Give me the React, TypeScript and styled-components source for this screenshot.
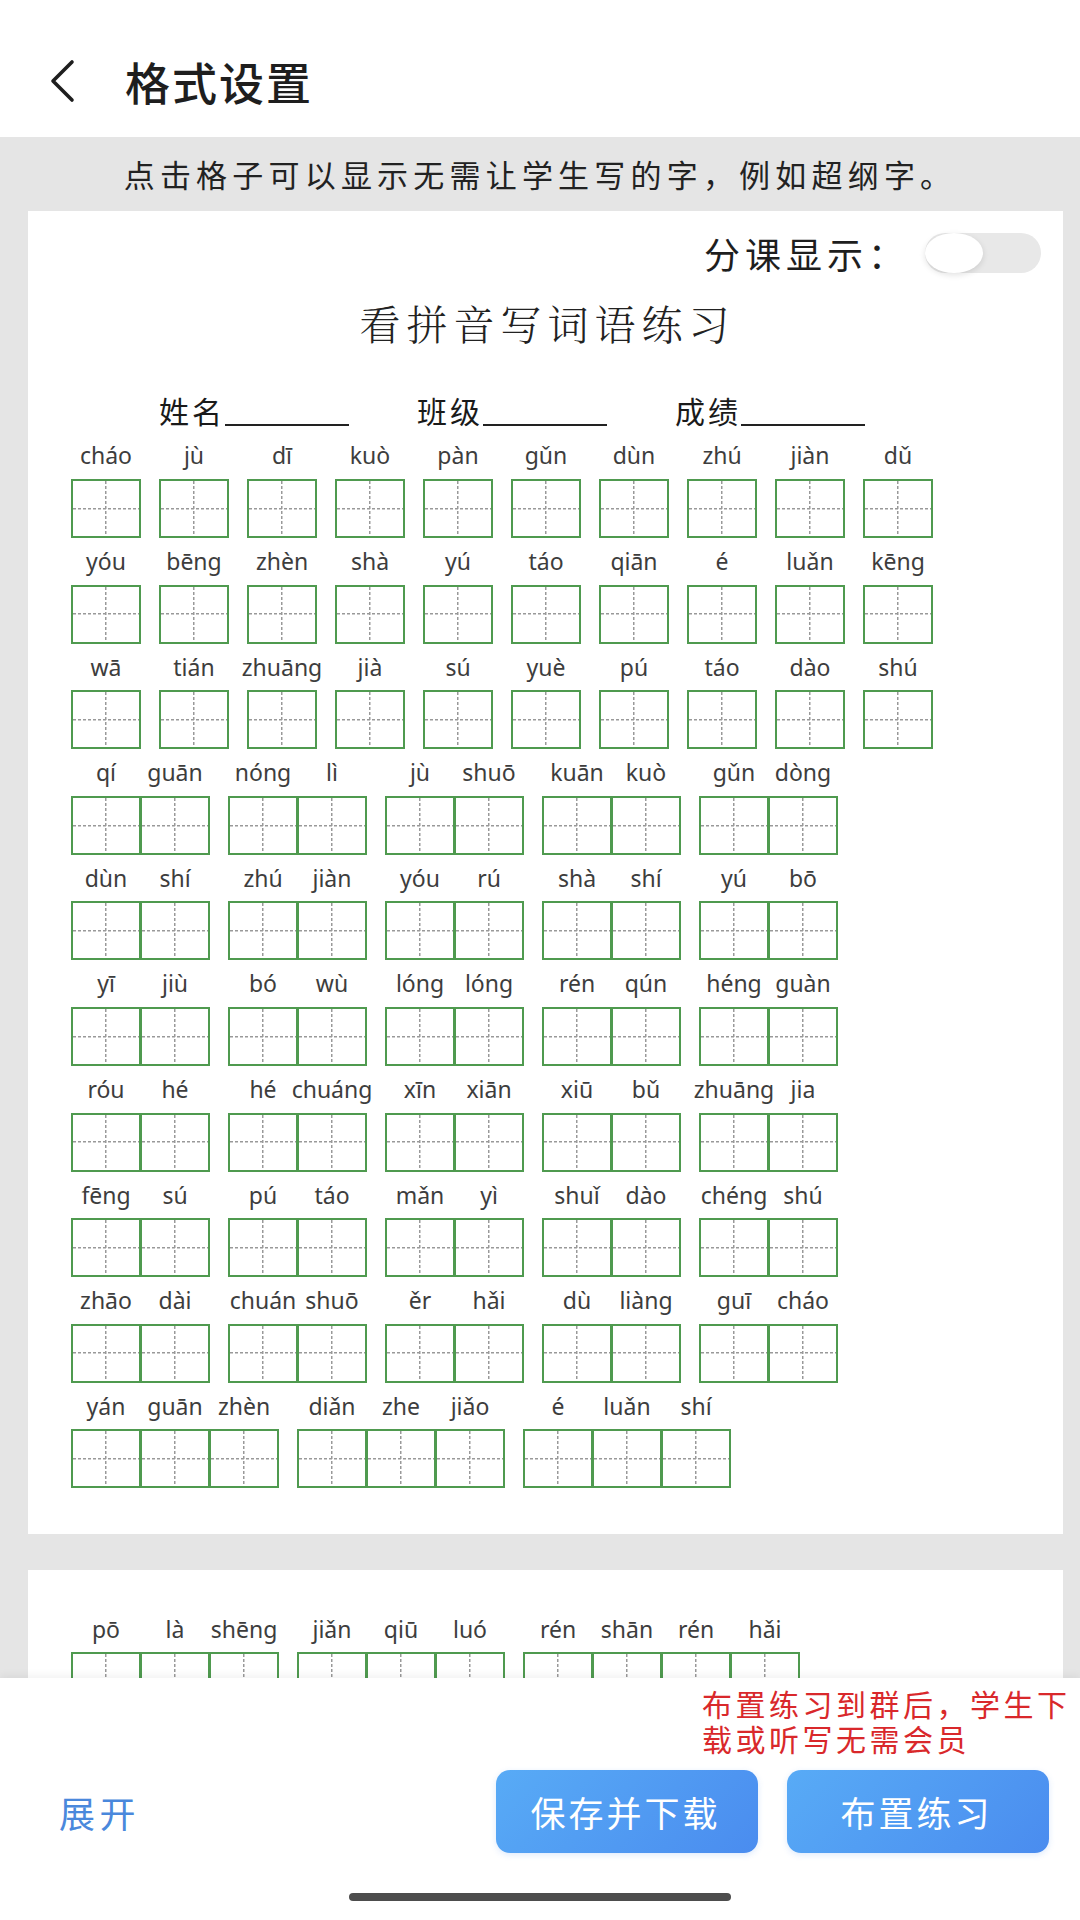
import React from "react";
import styled, { createGlobalStyle } from "styled-components";

const CJK = `"Noto Sans CJK SC", "Noto Sans", sans-serif`;
const KAI = `"KaiTi", "STKaiti", "AR PL UKai CN", "Noto Serif CJK SC", "Noto Sans CJK SC", serif`;
const PINYIN = `"Noto Sans", "DejaVu Sans", sans-serif`;

const GlobalStyle = createGlobalStyle`
  html, body { margin: 0; padding: 0; background: #fff; }
  body { width: 1080px; height: 1920px; overflow: hidden; font-family: ${CJK}; color: #222; }
  * { box-sizing: border-box; }
`;

const Screen = styled.div`
  width: 1080px;
  height: 1920px;
  display: flex;
  flex-direction: column;
  background: #fff;
`;

const Header = styled.header`
  height: 137px;
  flex-shrink: 0;
  display: flex;
  align-items: center;
  gap: 48px;
  padding: 25px 0 0 47px;
  background: #fff;
`;

const BackButton = styled.button`
  border: 0;
  background: none;
  padding: 0;
  width: 30px;
  height: 44px;
  display: flex;
  align-items: center;
  justify-content: center;
  cursor: pointer;
`;

const HeaderTitle = styled.h1`
  margin: 0;
  font-family: ${CJK};
  font-size: 45px;
  font-weight: 500;
  letter-spacing: 2px;
  line-height: 1;
  color: #1e1e1e;
`;

const Main = styled.main`
  flex: 1;
  min-height: 0;
  overflow: hidden;
  background: #e5e5e5;
  display: flex;
  flex-direction: column;
`;

const Notice = styled.p`
  margin: 0;
  flex-shrink: 0;
  height: 74px;
  line-height: 74px;
  text-align: center;
  font-size: 31px;
  letter-spacing: 5.2px;
  color: #222;
`;

const Sheet = styled.section<{ $cont?: boolean }>`
  flex-shrink: 0;
  margin: 0 17px ${(p) => (p.$cont ? "0" : "36px")} 28px;
  background: #fff;
  padding: ${(p) => (p.$cont ? "35.4px" : "0")} 22px 46px 43px;
`;

const ToggleRow = styled.div`
  display: flex;
  justify-content: flex-end;
  align-items: center;
  gap: 16px;
  padding-top: 22px;
`;

const ToggleLabel = styled.span`
  font-size: 36px;
  letter-spacing: 5px;
  line-height: 40px;
  color: #1e1e1e;
`;

const SwitchTrack = styled.div`
  width: 116px;
  height: 40px;
  border-radius: 20px;
  background: #e8e8e8;
  display: flex;
  align-items: center;
`;

const SwitchKnob = styled.div`
  width: 58px;
  height: 40px;
  border-radius: 50%;
  background: #fff;
  box-shadow: 0 2px 6px rgba(0, 0, 0, 0.12);
`;

const SheetTitle = styled.h2`
  margin: 20px 0 0;
  padding-right: 17px;
  text-align: center;
  font-family: ${KAI};
  font-size: 41px;
  font-weight: 300;
  letter-spacing: 6px;
  line-height: 60px;
  color: #222;
`;

const NameRow = styled.div`
  display: flex;
  gap: 68px;
  margin-top: 37px;
  padding-left: 88px;
  height: 40px;
`;

const NameField = styled.div`
  display: flex;
  align-items: flex-end;
`;

const NameLabel = styled.span`
  font-size: 30px;
  font-weight: 400;
  letter-spacing: 3px;
  line-height: 40px;
  color: #1a1a1a;
`;

const Blank = styled.span`
  width: 124px;
  height: 2px;
  margin-bottom: 4px;
  background: #222;
`;

const Grid = styled.div<{ $first?: boolean }>`
  display: flex;
  flex-direction: column;
  margin-top: ${(p) => (p.$first ? "2.4px" : "0")};
`;

const GridRow = styled.div`
  display: flex;
  gap: 18px;
`;

const Group = styled.div`
  display: flex;
`;

const Unit = styled.div`
  width: 70px;
  display: flex;
  flex-direction: column;
  align-items: center;
  & + & {
    margin-left: -1px;
  }
`;

const Pinyin = styled.span`
  height: 46.6px;
  line-height: 46.6px;
  font-family: ${PINYIN};
  font-size: 23px;
  color: #3d3d3d;
  white-space: nowrap;
`;

const Box = styled.div`
  width: 70px;
  height: 59px;
  border: 2px solid #4f9a4f;
  background-color: #fff;
  background-image: repeating-linear-gradient(to right, #999 0 3px, transparent 3px 5px),
    repeating-linear-gradient(to bottom, #999 0 3px, transparent 3px 5px);
  background-size: 100% 1.5px, 1.5px 100%;
  background-position: center center, center center;
  background-repeat: no-repeat;
`;

const BottomBar = styled.footer`
  height: 242px;
  flex-shrink: 0;
  position: relative;
  z-index: 1;
  background: #fff;
  box-shadow: 0 -3px 8px rgba(0, 0, 0, 0.05);
  display: flex;
  flex-direction: column;
  padding-top: 8px;
`;

const Hint = styled.p`
  margin: 0;
  align-self: flex-end;
  width: 378px;
  font-size: 30px;
  line-height: 35px;
  letter-spacing: 3.5px;
  color: #d9282b;
`;

const ActionRow = styled.div`
  margin-top: 14px;
  display: flex;
  align-items: center;
  gap: 29px;
  padding: 0 31px 0 59px;
`;

const ExpandButton = styled.button`
  margin-right: auto;
  border: 0;
  background: none;
  padding: 0;
  font-family: ${CJK};
  font-size: 36px;
  letter-spacing: 4.5px;
  color: #4a88dc;
  cursor: pointer;
`;

const ActionButton = styled.button`
  width: 262px;
  height: 83px;
  border: 0;
  border-radius: 14px;
  background: linear-gradient(135deg, #58abf6 0%, #4a8cef 100%);
  box-shadow: 0 2px 6px rgba(74, 140, 239, 0.18);
  color: #fff;
  font-family: ${CJK};
  font-size: 35px;
  letter-spacing: 3px;
  padding-left: 3px;
  cursor: pointer;
`;

const HomeIndicator = styled.div`
  align-self: center;
  width: 382px;
  height: 8px;
  border-radius: 4px;
  background: #4d4d4d;
  margin-top: 40px;
`;

type Row = string[][];

const sheetRows: Row[] = [
  [["cháo"], ["jù"], ["dī"], ["kuò"], ["pàn"], ["gǔn"], ["dùn"], ["zhú"], ["jiàn"], ["dǔ"]],
  [["yóu"], ["bēng"], ["zhèn"], ["shà"], ["yú"], ["táo"], ["qiān"], ["é"], ["luǎn"], ["kēng"]],
  [["wā"], ["tián"], ["zhuāng"], ["jià"], ["sú"], ["yuè"], ["pú"], ["táo"], ["dào"], ["shú"]],
  [["qí", "guān"], ["nóng", "lì"], ["jù", "shuō"], ["kuān", "kuò"], ["gǔn", "dòng"]],
  [["dùn", "shí"], ["zhú", "jiàn"], ["yóu", "rú"], ["shà", "shí"], ["yú", "bō"]],
  [["yī", "jiù"], ["bó", "wù"], ["lóng", "lóng"], ["rén", "qún"], ["héng", "guàn"]],
  [["róu", "hé"], ["hé", "chuáng"], ["xīn", "xiān"], ["xiū", "bǔ"], ["zhuāng", "jia"]],
  [["fēng", "sú"], ["pú", "táo"], ["mǎn", "yì"], ["shuǐ", "dào"], ["chéng", "shú"]],
  [["zhāo", "dài"], ["chuán", "shuō"], ["ěr", "hǎi"], ["dù", "liàng"], ["guī", "cháo"]],
  [["yán", "guān", "zhèn"], ["diǎn", "zhe", "jiǎo"], ["é", "luǎn", "shí"]],
];

const nextRows: Row[] = [
  [["pō", "là", "shēng"], ["jiǎn", "qiū", "luó"], ["rén", "shān", "rén", "hǎi"]],
];

const WordRow: React.FC<{ row: Row }> = ({ row }) => (
  <GridRow>
    {row.map((word, gi) => (
      <Group key={gi}>
        {word.map((py, ci) => (
          <Unit key={ci}>
            <Pinyin>{py}</Pinyin>
            <Box />
          </Unit>
        ))}
      </Group>
    ))}
  </GridRow>
);

const ChevronLeft = () => (
  <svg width="30" height="44" viewBox="0 0 30 44" fill="none">
    <path d="M25 3 L6 22 L25 41" stroke="#1e1e1e" strokeWidth="3.6" strokeLinecap="round" strokeLinejoin="round" />
  </svg>
);

export default function App() {
  return (
    <>
      <GlobalStyle />
      <Screen>
        <Header>
          <BackButton aria-label="返回">
            <ChevronLeft />
          </BackButton>
          <HeaderTitle>格式设置</HeaderTitle>
        </Header>

        <Main>
          <Notice>点击格子可以显示无需让学生写的字，例如超纲字。</Notice>

          <Sheet>
            <ToggleRow>
              <ToggleLabel>分课显示：</ToggleLabel>
              <SwitchTrack>
                <SwitchKnob />
              </SwitchTrack>
            </ToggleRow>
            <SheetTitle>看拼音写词语练习</SheetTitle>
            <NameRow>
              <NameField>
                <NameLabel>姓名</NameLabel>
                <Blank />
              </NameField>
              <NameField>
                <NameLabel>班级</NameLabel>
                <Blank />
              </NameField>
              <NameField>
                <NameLabel>成绩</NameLabel>
                <Blank />
              </NameField>
            </NameRow>
            <Grid $first>
              {sheetRows.map((row, i) => (
                <WordRow key={i} row={row} />
              ))}
            </Grid>
          </Sheet>

          <Sheet $cont>
            <Grid>
              {nextRows.map((row, i) => (
                <WordRow key={i} row={row} />
              ))}
            </Grid>
          </Sheet>
        </Main>

        <BottomBar>
          <Hint>布置练习到群后，学生下载或听写无需会员</Hint>
          <ActionRow>
            <ExpandButton>展开</ExpandButton>
            <ActionButton>保存并下载</ActionButton>
            <ActionButton>布置练习</ActionButton>
          </ActionRow>
          <HomeIndicator />
        </BottomBar>
      </Screen>
    </>
  );
}
